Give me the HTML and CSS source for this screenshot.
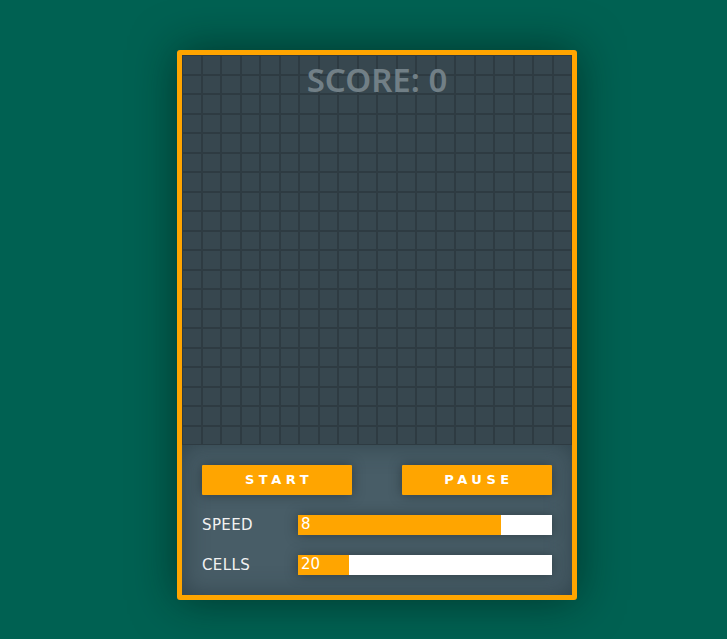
FILE: index.html
```html
<!DOCTYPE html>
<html lang="en">
<head>
<meta charset="utf-8">
<title>Snake</title>
<link rel="stylesheet" href="styles.css">
</head>
<body>
<div class="frame">
  <div class="board">
    <div class="grid" id="grid"></div>
    <div class="score">SCORE: 0</div>
  </div>
  <div class="controls">
    <div class="buttons">
      <button class="btn">START</button>
      <button class="btn">PAUSE</button>
    </div>
    <div class="row">
      <span class="label">SPEED</span>
      <div class="bar"><div class="fill" style="width:80%"><span class="val">8</span></div></div>
    </div>
    <div class="row">
      <span class="label">CELLS</span>
      <div class="bar"><div class="fill" style="width:20%"><span class="val">20</span></div></div>
    </div>
  </div>
</div>
<script>
  var g = document.getElementById('grid');
  var h = '';
  for (var i = 0; i < 400; i++) h += '<div class="cell"></div>';
  g.innerHTML = h;
</script>
</body>
</html>
```

FILE: styles.css
```css
html, body {
  margin: 0;
  padding: 0;
}
body {
  background: #006152;
  width: 727px;
  height: 639px;
  overflow: hidden;
  padding: 50px 0 0 177px;
  box-sizing: border-box;
  font-family: "Noto Sans", "DejaVu Sans", sans-serif;
}
.frame {
  width: 390px;
  border: 5px solid #ffa500;
  border-radius: 3px;
  box-shadow: 0 0 45px rgba(0, 20, 15, 0.55);
  background: #455a64;
}
.board {
  position: relative;
  width: 390px;
  height: 390px;
}
.grid {
  display: grid;
  grid-template-columns: repeat(20, 1fr);
  grid-template-rows: repeat(20, 1fr);
  width: 390px;
  height: 390px;
  background: #37474f;
}
.cell {
  border: 1px solid #2e3b42;
  background: #37474f;
}
.score {
  position: absolute;
  left: 0;
  right: 0;
  top: 2px;
  text-align: center;
  font-family: "Noto Sans", sans-serif;
  font-weight: 600;
  font-size: 33px;
  line-height: 46px;
  color: #717f86;
}
.controls {
  height: 150px;
  box-sizing: border-box;
  padding: 20px;
  display: flex;
  flex-direction: column;
  gap: 20px;
  background: #485d67;
  box-shadow: inset 0 0 25px rgba(30, 45, 52, 0.55);
}
.buttons {
  display: flex;
  justify-content: space-between;
}
.btn {
  width: 150px;
  height: 30px;
  border: none;
  border-radius: 1px;
  background: #ffa500;
  color: #fff;
  font-family: "DejaVu Sans", sans-serif;
  font-weight: bold;
  font-size: 13px;
  letter-spacing: 4.5px;
  padding: 0 0 2px 4px;
  box-shadow: 0 0 12px rgba(30, 42, 48, 0.6);
}
.row {
  display: flex;
  align-items: center;
  height: 20px;
}
.label {
  width: 96px;
  color: #f2f2f2;
  font-family: "DejaVu Sans", sans-serif;
  font-size: 15px;
  letter-spacing: 0.4px;
}
.bar {
  flex: 1;
  height: 20px;
  background: #fff;
  box-shadow: 0 0 12px rgba(30, 42, 48, 0.6);
}
.fill {
  height: 20px;
  background: #ffa500;
  display: flex;
  align-items: center;
}
.val {
  padding: 0 0 2px 3px;
  color: #fff;
  font-family: "DejaVu Sans", sans-serif;
  font-size: 15px;
  line-height: 18px;
}
```
